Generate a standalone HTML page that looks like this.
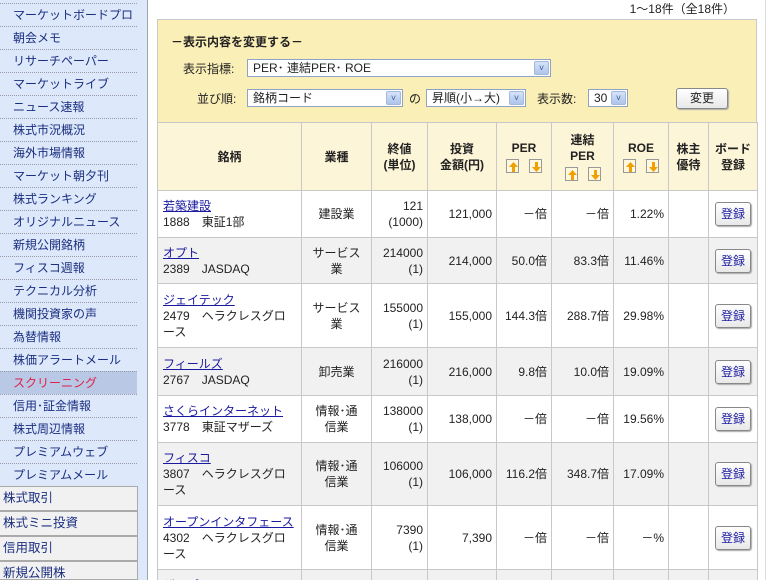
<!DOCTYPE html>
<html><head><meta charset="utf-8">
<style>
*{margin:0;padding:0;box-sizing:border-box}
html,body{width:777px;height:580px;overflow:hidden}
body{background:#fff;font-family:"Liberation Sans","Noto Sans CJK JP",sans-serif;font-size:12px;color:#222;position:relative}
.side{position:absolute;left:0;top:0;width:148px;height:580px;background:#dde8fa;border-right:1px solid #9aa;}
.side .it{position:absolute;left:0;width:137px;height:23px;border-top:1px dotted #99a;line-height:22px;padding-left:13px;color:#1a2f80;font-size:12px}
.side .sel{background:#b9c8e4;color:#e0204a}
.side .g{position:absolute;left:0;width:138px;height:25px;background:#f1f1f1;border:1px solid #aaa;border-left:none;line-height:23px;padding-left:3px;color:#1a2f80;font-size:12.5px}
.cnt{position:absolute;right:42px;top:0;font-size:12px}
.box{position:absolute;left:157px;top:19px;width:600px;height:104px;background:#fbefb8;border:1px solid #c9c9c9}
.box .t{position:absolute;left:13px;top:13px;font-weight:bold;font-size:12px}
.lbl{position:absolute;font-size:12px}
.selb{position:absolute;height:18px;background:#fff;border:1px solid #8fa4c4;font-size:12px;line-height:16px;padding-left:5px}
.selb i{position:absolute;right:1px;top:1px;width:15px;height:14px;background:linear-gradient(#d6e3f9,#aec4ea);border:1px solid #a5b9dc;border-radius:2px;font-style:normal;color:#3b5c9a;font-size:9px;line-height:12px;text-align:center}
.btn{position:absolute;left:676px;top:88px;width:52px;height:21px;border:1px solid #888;border-radius:3px;background:linear-gradient(#fff,#e8e8e8);text-align:center;line-height:19px;font-size:12px;box-shadow:1px 1px 1px #aaa}
.tw{position:absolute;left:157px;top:122px;width:601px;height:458px;overflow:hidden}
table{border-collapse:collapse;table-layout:fixed;width:600px}
td,th{border:1px solid #c8c8c8;font-size:12px;line-height:16px}
th{background:#fdf5d8;font-weight:bold;text-align:center}
td{text-align:right;padding-right:4px;vertical-align:middle}
td.n{text-align:left;padding-left:5px}
td.c{text-align:center;padding:0}
tr.a td{background:#f1f1f1}
a{color:#1a1aa0;text-decoration:underline}
.ar{display:inline-block;width:13px;height:14px;border:1px solid #999;background:#fff8dc;margin:2px 5px 0;vertical-align:middle;position:relative}
.ar svg{position:absolute;left:1px;top:1px}
.reg{display:inline-block;width:36px;height:24px;border:1px solid #888;border-radius:3px;background:linear-gradient(#fff,#e8e8e8);color:#1a1aa0;line-height:22px;text-align:center;box-shadow:1px 1px 1px #aaa}
.edge{position:absolute;left:765px;top:0;width:1px;height:580px;background:#ddd}
</style></head><body>
<div class="side">
<div class="it" style="top:3px">マーケットボードプロ</div>
<div class="it" style="top:26px">朝会メモ</div>
<div class="it" style="top:49px">リサーチペーパー</div>
<div class="it" style="top:72px">マーケットライブ</div>
<div class="it" style="top:95px">ニュース速報</div>
<div class="it" style="top:118px">株式市況概況</div>
<div class="it" style="top:141px">海外市場情報</div>
<div class="it" style="top:164px">マーケット朝夕刊</div>
<div class="it" style="top:187px">株式ランキング</div>
<div class="it" style="top:210px">オリジナルニュース</div>
<div class="it" style="top:233px">新規公開銘柄</div>
<div class="it" style="top:256px">フィスコ週報</div>
<div class="it" style="top:279px">テクニカル分析</div>
<div class="it" style="top:302px">機関投資家の声</div>
<div class="it" style="top:325px">為替情報</div>
<div class="it" style="top:348px">株価アラートメール</div>
<div class="it sel" style="top:371px">スクリーニング</div>
<div class="it" style="top:394px">信用･証金情報</div>
<div class="it" style="top:417px">株式周辺情報</div>
<div class="it" style="top:440px">プレミアムウェブ</div>
<div class="it" style="top:463px">プレミアムメール</div>
<div class="g" style="top:486px">株式取引</div>
<div class="g" style="top:511px">株式ミニ投資</div>
<div class="g" style="top:536px">信用取引</div>
<div class="g" style="top:561px;height:19px">新規公開株</div>
</div>
<div class="edge"></div>
<div class="cnt">1～18件（全18件）</div>
<div class="box"><div class="t">－表示内容を変更する－</div></div>
<div class="lbl" style="left:183px;top:60px">表示指標:</div>
<div class="selb" style="left:247px;top:59px;width:304px">PER･ 連結PER･ ROE<i>˅</i></div>
<div class="lbl" style="left:197px;top:90px">並び順:</div>
<div class="selb" style="left:247px;top:89px;width:156px">銘柄コード<i>˅</i></div>
<div class="lbl" style="left:409px;top:90px">の</div>
<div class="selb" style="left:426px;top:89px;width:100px">昇順(小→大)<i>˅</i></div>
<div class="lbl" style="left:537px;top:90px">表示数:</div>
<div class="selb" style="left:588px;top:89px;width:40px">30<i>˅</i></div>
<div class="btn">変更</div>
<div class="tw">
<table>
<colgroup><col style="width:144px"><col style="width:70px"><col style="width:56px"><col style="width:69px"><col style="width:55px"><col style="width:62px"><col style="width:55px"><col style="width:40px"><col style="width:49px"></colgroup>
<tr style="height:68px"><th>銘柄</th><th>業種</th><th>終値<br>(単位)</th><th>投資<br>金額(円)</th>
<th>PER<br><span class="ar"><svg width="11" height="12"><path d="M5.5 1L1 6h3v5h3V6h3z" fill="#f0a000"/></svg></span><span class="ar"><svg width="11" height="12"><path d="M5.5 11L1 6h3V1h3v5h3z" fill="#f0a000"/></svg></span></th>
<th>連結<br>PER<br><span class="ar"><svg width="11" height="12"><path d="M5.5 1L1 6h3v5h3V6h3z" fill="#f0a000"/></svg></span><span class="ar"><svg width="11" height="12"><path d="M5.5 11L1 6h3V1h3v5h3z" fill="#f0a000"/></svg></span></th>
<th>ROE<br><span class="ar"><svg width="11" height="12"><path d="M5.5 1L1 6h3v5h3V6h3z" fill="#f0a000"/></svg></span><span class="ar"><svg width="11" height="12"><path d="M5.5 11L1 6h3V1h3v5h3z" fill="#f0a000"/></svg></span></th>
<th>株主<br>優待</th><th>ボード<br>登録</th></tr>
<tr style="height:47px"><td class="n"><a>若築建設</a><br>1888　東証1部</td><td class="c">建設業</td><td>121<br>(1000)</td><td>121,000</td><td>－倍</td><td>－倍</td><td>1.22%</td><td></td><td class="c"><span class="reg">登録</span></td></tr>
<tr class="a" style="height:46px"><td class="n"><a>オプト</a><br>2389　JASDAQ</td><td class="c">サービス<br>業</td><td>214000<br>(1)</td><td>214,000</td><td>50.0倍</td><td>83.3倍</td><td>11.46%</td><td></td><td class="c"><span class="reg">登録</span></td></tr>
<tr style="height:64px"><td class="n"><a>ジェイテック</a><br>2479　ヘラクレスグロース</td><td class="c">サービス<br>業</td><td>155000<br>(1)</td><td>155,000</td><td>144.3倍</td><td>288.7倍</td><td>29.98%</td><td></td><td class="c"><span class="reg">登録</span></td></tr>
<tr class="a" style="height:48px"><td class="n"><a>フィールズ</a><br>2767　JASDAQ</td><td class="c">卸売業</td><td>216000<br>(1)</td><td>216,000</td><td>9.8倍</td><td>10.0倍</td><td>19.09%</td><td></td><td class="c"><span class="reg">登録</span></td></tr>
<tr style="height:47px"><td class="n"><a>さくらインターネット</a><br>3778　東証マザーズ</td><td class="c">情報･通<br>信業</td><td>138000<br>(1)</td><td>138,000</td><td>－倍</td><td>－倍</td><td>19.56%</td><td></td><td class="c"><span class="reg">登録</span></td></tr>
<tr class="a" style="height:63px"><td class="n"><a>フィスコ</a><br>3807　ヘラクレスグロース</td><td class="c">情報･通<br>信業</td><td>106000<br>(1)</td><td>106,000</td><td>116.2倍</td><td>348.7倍</td><td>17.09%</td><td></td><td class="c"><span class="reg">登録</span></td></tr>
<tr style="height:64px"><td class="n"><a>オープンインタフェース</a><br>4302　ヘラクレスグロース</td><td class="c">情報･通<br>信業</td><td>7390<br>(1)</td><td>7,390</td><td>－倍</td><td>－倍</td><td>－%</td><td></td><td class="c"><span class="reg">登録</span></td></tr>
<tr class="a" style="height:47px"><td class="n"><a>ザッパラス</a><br>3770</td><td class="c"></td><td></td><td></td><td></td><td></td><td></td><td></td><td class="c"></td></tr>
</table>
</div>
</body></html>
